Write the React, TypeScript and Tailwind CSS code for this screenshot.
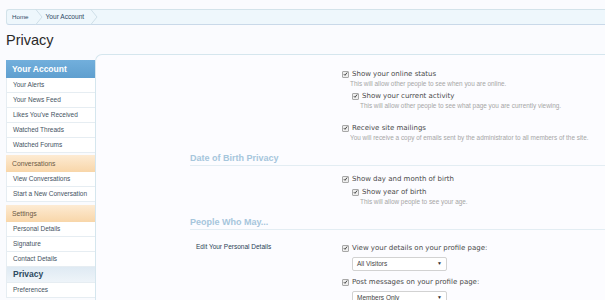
import React from "react";

const Check = ({ className = "" }: { className?: string }) => (
  <span
    className={
      "inline-flex h-[7px] w-[7px] shrink-0 items-center justify-center rounded-[1px] border border-[#a8a8a8] bg-[#eeeeee] " +
      className
    }
  >
    <svg width="6" height="6" viewBox="0 0 6 6">
      <path d="M1 3.2 L2.4 4.6 L5 1.2" fill="none" stroke="#333" strokeWidth="1.1" />
    </svg>
  </span>
);

const Row = ({ label, sub = false, className = "" }: { label: string; sub?: boolean; className?: string }) => (
  <div className={"flex h-[10px] items-center gap-[3px] " + (sub ? "pl-[10px] " : "") + className}>
    <Check />
    <span
      className="text-[7px] font-normal leading-[10px] text-[#4a4a4a]"
      style={{ fontFamily: '"DejaVu Sans", Verdana, sans-serif' }}
    >
      {label}
    </span>
  </div>
);

const Desc = ({ text, sub = false }: { text: string; sub?: boolean }) => (
  <div className={"h-[10px] text-[6.4px] leading-[10px] text-[#a6a6a6] " + (sub ? "pl-[18px]" : "pl-[8px]")}>{text}</div>
);

const Heading = ({ text, className = "" }: { text: string; className?: string }) => (
  <div className={"border-b border-[#e3edf3] pb-[1px] text-[9px] font-bold leading-[12px] text-[#a6c6dc] " + className}>
    {text}
  </div>
);

const Select = ({ value, className = "" }: { value: string; className?: string }) => (
  <div
    className={
      "ml-[10px] flex h-[14px] w-[95px] items-center justify-between rounded-[2px] border border-[#d2d2d2] bg-white pl-[4px] pr-[4px] " +
      className
    }
  >
    <span className="text-[6.5px] text-[#444]">{value}</span>
    <span className="text-[5px] text-[#333]">▼</span>
  </div>
);

const Item = ({ text }: { text: string }) => (
  <div className="flex h-[15px] items-center border-b border-[#e6edf2] pl-[6px] text-[6.5px] text-[#44525f]">{text}</div>
);

const GroupHead = ({ text, className = "" }: { text: string; className?: string }) => (
  <div
    className={
      "flex h-[17px] items-center bg-gradient-to-b from-[#fdebd3] to-[#f8d6a9] pl-[6px] pt-[2px] text-[6.8px] text-[#6b5a45] " +
      className
    }
  >
    {text}
  </div>
);

const Chevron = () => (
  <svg width="8" height="16" viewBox="0 0 8 16" className="shrink-0">
    <path d="M0.5 0 L7 8 L0.5 16" fill="none" stroke="#cfdfe8" strokeWidth="1" />
  </svg>
);

export default function App() {
  return (
    <div
      className="h-[300px] w-[605px] overflow-hidden bg-[#fafbfe] pl-[6px]"
      style={{ fontFamily: '"Liberation Sans", Arial, sans-serif' }}
    >
      {/* breadcrumb */}
      <div className="mt-[9px] flex h-[16px] items-center rounded-l-[3px] border border-r-0 border-[#d3e3ea] border-b-[#c9d9e9] bg-[#eef7fc]">
        <span className="pl-[5px] pr-[6px] text-[6.2px] text-[#2f4a66]">Home</span>
        <Chevron />
        <span className="pl-[3px] pr-[6px] text-[6.6px] text-[#2f4a66]">Your Account</span>
        <Chevron />
      </div>

      {/* title */}
      <div className="mt-[6px] h-[18px] text-[14.5px] leading-[18px] text-[#2a2a2a]">Privacy</div>

      <div className="mt-[5px] flex">
        {/* sidebar */}
        <div className="mt-[6px] w-[89px] shrink-0">
          <div className="flex h-[18px] items-center bg-gradient-to-b from-[#72afdc] to-[#5f9fcf] pl-[6px] text-[8.5px] font-bold text-white">
            Your Account
          </div>
          <div className="border-l border-[#e6edf2] bg-white">
            <Item text="Your Alerts" />
            <Item text="Your News Feed" />
            <Item text="Likes You've Received" />
            <Item text="Watched Threads" />
            <Item text="Watched Forums" />
          </div>
          <GroupHead text="Conversations" className="mt-[2px]" />
          <div className="border-l border-[#e6edf2] bg-white">
            <Item text="View Conversations" />
            <Item text="Start a New Conversation" />
          </div>
          <GroupHead text="Settings" className="mt-[3px]" />
          <div className="border-l border-[#e6edf2] bg-white">
            <Item text="Personal Details" />
            <Item text="Signature" />
            <Item text="Contact Details" />
            <div className="flex h-[16px] items-center border-b border-[#e6edf2] bg-gradient-to-b from-[#dfeaf3] to-[#eef4f9] pl-[6px] text-[8.5px] font-bold text-[#2d4a60]">
              Privacy
            </div>
            <Item text="Preferences" />
          </div>
        </div>

        {/* main panel */}
        <div className="h-[260px] flex-1 rounded-tl-[7px] border-l border-t border-[#d5e6ee] bg-[#fcfcff] pl-[94px] pt-[14px]">
          <div className="pl-[152px]">
            <Row label="Show your online status" />
            <Desc text="This will allow other people to see when you are online." />
            <Row label="Show your current activity" sub className="mt-[2px]" />
            <Desc text="This will allow other people to see what page you are currently viewing." sub />
            <Row label="Receive site mailings" className="mt-[12px]" />
            <Desc text="You will receive a copy of emails sent by the administrator to all members of the site." />
          </div>

          <Heading text="Date of Birth Privacy" className="mt-[9px]" />

          <div className="mt-[8px] pl-[152px]">
            <Row label="Show day and month of birth" />
            <Row label="Show year of birth" sub className="mt-[3px]" />
            <Desc text="This will allow people to see your age." sub />
          </div>

          <Heading text="People Who May..." className="mt-[9px]" />

          <div className="mt-[13px] flex">
            <div className="w-[152px] shrink-0 pl-[6px] text-[6.5px] leading-[8px] text-[#2a3f55]">Edit Your Personal Details</div>
            <div>
              <Row label="View your details on your profile page:" />
              <Select value="All Visitors" className="mt-[4px]" />
              <Row label="Post messages on your profile page:" className="mt-[6px]" />
              <Select value="Members Only" className="mt-[4px]" />
            </div>
          </div>
        </div>
      </div>
    </div>
  );
}
